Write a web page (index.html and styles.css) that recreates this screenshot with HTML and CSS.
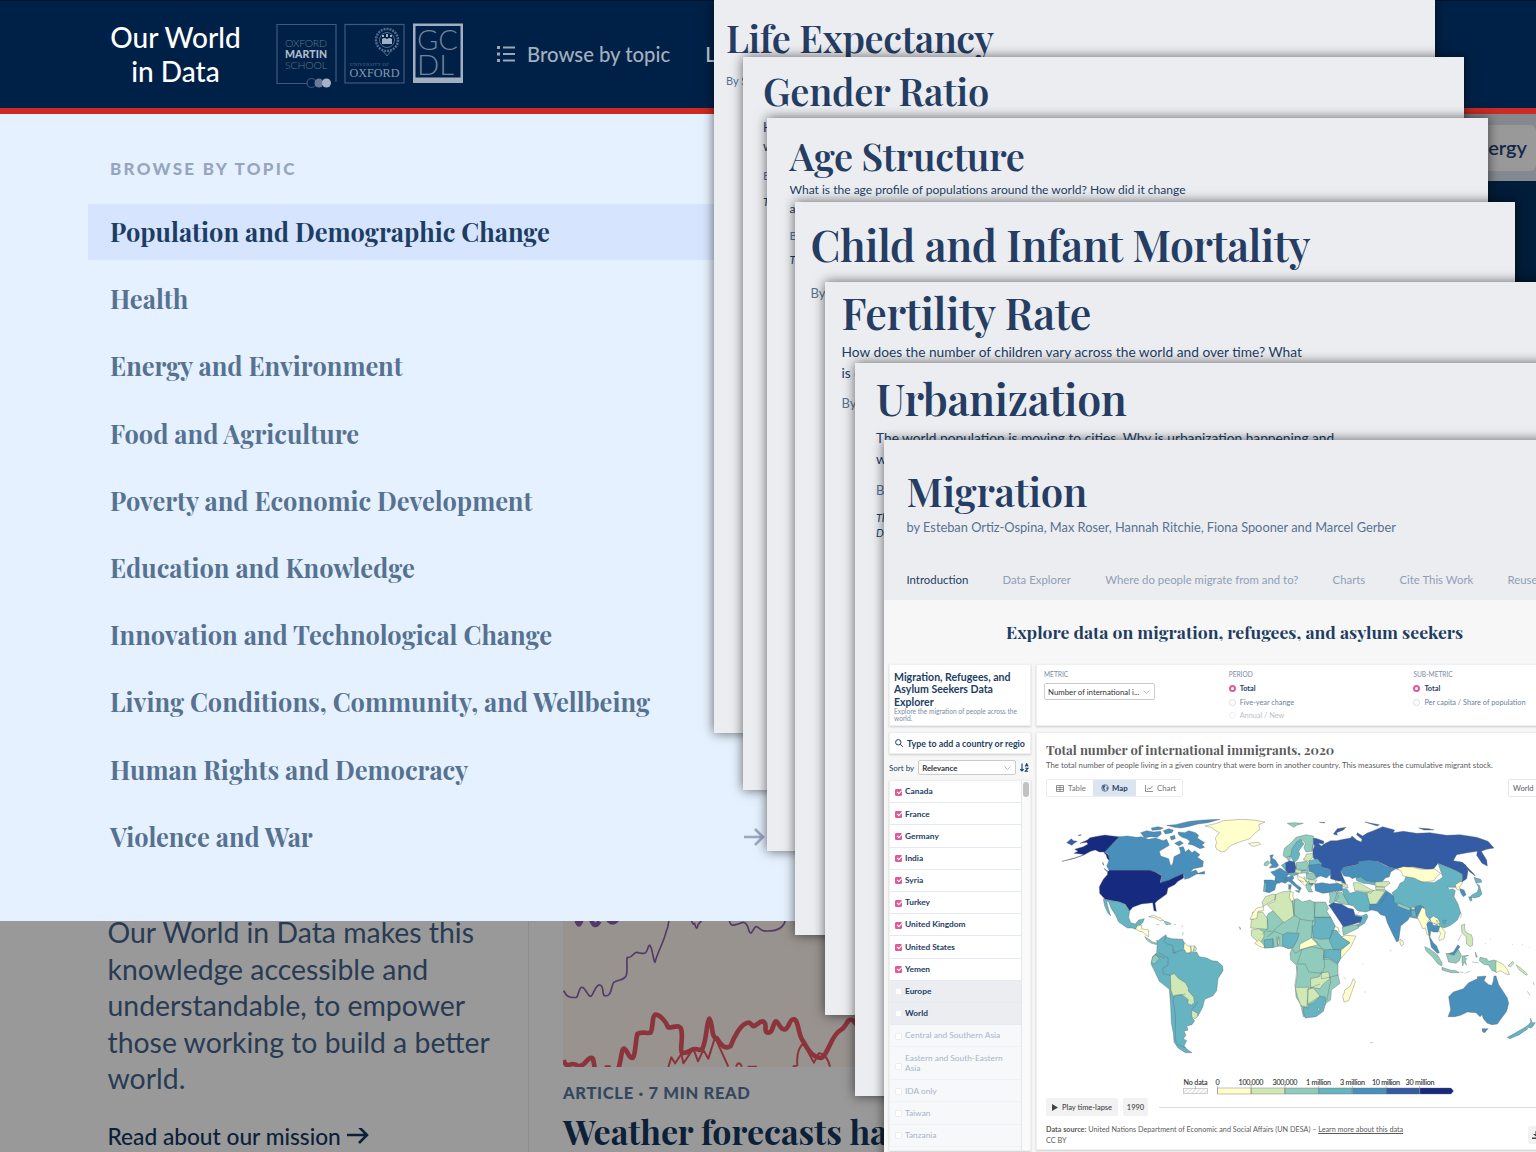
FILE: index.html
```html
<!DOCTYPE html>
<html lang="en">
<head>
<meta charset="utf-8">
<title>Our World in Data</title>
<link rel="stylesheet" href="styles.css">
</head>
<body>
<header class="site-header">
  <div class="brand">Our World<br>in Data</div>
  <svg class="logos" width="190" height="70" viewBox="0 0 190 70">
    <g fill="none" stroke="#40587a" stroke-width="1.2">
      <path d="M31 63.500H1V4.500H60V62"/>
      <rect x="69" y="4.500" width="59" height="58.500"/>
      <circle cx="35.500" cy="63" r="4.500"/>
    </g>
    <circle cx="43" cy="63" r="4.500" fill="#68799a"/>
    <circle cx="50.500" cy="63" r="4.500" fill="#a9b2c4"/>
    <g class="lato" font-size="10.500" fill="#61748f">
      <text x="9" y="26.500" textLength="42" font-weight="300">OXFORD</text>
      <text x="9" y="37.500" textLength="42" font-weight="900" fill="#b0bac9">MARTIN</text>
      <text x="9" y="49" textLength="42" font-weight="300">SCHOOL</text>
    </g>
    <g fill="none" stroke="#54698a">
      <circle cx="111" cy="20" r="11" stroke-width="2.500" stroke-dasharray="2 1"/>
      <circle cx="111" cy="20" r="7.500"/>
      <path d="M107 31l4 5 4-5"/>
    </g>
    <path d="M106 19q2-2 5 0q3-2 5 0v5h-10zM106 15h2v2h-2zM110 14h2v3h-2zM114 15h2v2h-2z" fill="#a3aec0"/>
    <g class="crest-text" fill="#8796ae">
      <text x="74" y="46" font-size="5" textLength="39" fill="#50658a">UNIVERSITY OF</text>
      <text x="73.500" y="57" font-size="12" textLength="50" lengthAdjust="spacingAndGlyphs">OXFORD</text>
    </g>
    <path d="M137 3.500h50v59.500h-50zM139.500 6v51.500h45V6z" fill="#a3aec0" fill-rule="evenodd"/>
    <g class="lato" font-size="28" font-weight="300" fill="#73849d">
      <text x="141" y="29.500" textLength="41" lengthAdjust="spacingAndGlyphs">GC</text>
      <text x="141" y="54.500" textLength="37" lengthAdjust="spacingAndGlyphs">DL</text>
    </g>
  </svg>
  <nav class="top-nav">
    <svg width="20" height="18" viewBox="0 0 20 18" fill="#9ba6b8"><path d="M1 1h3v3H1zM1 7.500h3v3H1zM1 14h3v3H1zM7 1.500h12v2H7zM7 8h12v2H7zM7 14.500h12v2H7z"/></svg>
    <span>Browse by topic</span>
    <span class="next">Latest</span>
  </nav>
</header>

<main class="home">
  <div class="topic-strip"><span class="chip">Energy</span></div>
  <div class="hero"></div>
  <section class="columns">
    <div class="mission">
      <p>Our World in Data makes this<br>knowledge accessible and<br>understandable, to empower<br>those working to build a better<br>world.</p>
      <a>Read about our mission
        <svg width="22" height="18" viewBox="0 0 22 18" fill="none" stroke="#0c2138" stroke-width="2.600"><path d="M0 7h20M12-1l8 8-8 8"/></svg></a>
    </div>
    <article class="story">
      <svg class="thumb" width="340" height="167" viewBox="129 0 1020 501">
        <rect x="129" width="1020" height="501" fill="#98938f"/>
        <g fill="none" stroke="#543a68" stroke-width="5" stroke-linejoin="round">
          <path d="M131 272C140 292 150 294 170 292C178 280 176 262 186 262S204 290 212 289S226 252 240 255S244 288 256 288C276 288 272 262 281 247C295 238 312 242 319 226C324 210 318 182 322 172C338 176 340 156 350 157S370 164 377 158S384 134 390 136C399 150 398 176 405 187C410 164 430 128 437 100Q444 84 447 60"/>
          <path d="M512 55Q520 80 524 70Q530 96 534 74L545 62M628 55C628 80 640 77 652 73S672 62 680 74S684 92 690 98S700 82 708 80S720 96 740 93Q790 94 796 60"/>
          <path d="M170 60q6 26 14 0M214 60q10 28 24 4M265 60q12 14 26 0" stroke-width="14"/>
        </g>
        <g fill="none" stroke="#8c343c" stroke-width="14" stroke-linejoin="round">
          <path d="M131 480Q136 500 150 494T176 500L192 492Q216 462 220 480L224 503M254 503H272M296 503C304 480 304 446 312 446S326 474 336 474S346 426 352 402C366 392 382 402 392 398C402 374 394 350 406 344C420 344 438 364 444 382C460 384 480 370 484 390C490 420 478 450 486 458C505 462 510 446 526 447S540 456 548 444C560 420 560 362 568 356C580 370 572 414 590 414C606 440 616 448 632 438C642 410 660 380 674 372S690 368 698 377S720 356 732 366S728 396 744 398S760 362 768 364S780 390 794 388S808 354 822 358S834 402 848 422S866 460 888 470S912 468 922 450S942 400 962 390S980 350 1000 362L1030 400"/>
          <path d="M445 501L454 472L465 490L484 462L490 490L520 446L534 484L550 450L565 476L585 412L625 500M648 500q8-20 18 0M683 500h28M818 500l14-4Q828 450 850 430L882 488L896 460Q920 460 930 500" stroke-width="6"/>
        </g>
      </svg>
      <div class="kicker">ARTICLE · 7 MIN READ</div>
      <h2>Weather forecasts have become</h2>
    </article>
  </section>
</main>

<aside class="topic-menu">
  <div class="menu-label">BROWSE BY TOPIC</div>
  <ul>
    <li class="active">Population and Demographic Change</li>
    <li>Health</li>
    <li>Energy and Environment</li>
    <li>Food and Agriculture</li>
    <li>Poverty and Economic Development</li>
    <li>Education and Knowledge</li>
    <li>Innovation and Technological Change</li>
    <li>Living Conditions, Community, and Wellbeing</li>
    <li>Human Rights and Democracy</li>
    <li>Violence and War
      <svg width="21" height="18" viewBox="0 0 21 18" fill="none" stroke="#98a9c2" stroke-width="2.600"><path d="M0 9h19M11 1l8 8-8 8"/></svg></li>
  </ul>
</aside>

<section class="sheet life"><h1>Life Expectancy</h1><p class="by">By Saloni Dattani</p></section>
<section class="sheet gender"><h1>Gender Ratio</h1><p class="lead">How does<br>what</p><p class="by">By Hannah</p><p class="note">This</p></section>
<section class="sheet age"><h1>Age Structure</h1><p class="lead">What is the age profile of populations around the world? How did it change<br>and</p><p class="by">By Hannah</p><p class="note">This</p></section>
<section class="sheet child"><h1>Child and Infant Mortality</h1><p class="by">By Max</p></section>
<section class="sheet fertility"><h1>Fertility Rate</h1><p class="lead">How does the number of children vary across the world and over time? What<br>is driving</p><p class="by">By Max</p></section>
<section class="sheet urban"><h1>Urbanization</h1><p class="lead">The world population is moving to cities. Why is urbanization happening and<br>what</p><p class="by">By Hannah</p><p class="note">This<br>Data</p></section>

<section class="sheet migration">
  <div class="m-head">
    <h1>Migration</h1>
    <p class="authors">by Esteban Ortiz-Ospina, Max Roser, Hannah Ritchie, Fiona Spooner and Marcel Gerber</p>
    <nav class="tabs"><span class="on">Introduction</span><span>Data Explorer</span><span>Where do people migrate from and to?</span><span>Charts</span><span>Cite This Work</span><span>Reuse</span></nav>
  </div>
  <h2>Explore data on migration, refugees, and asylum seekers</h2>
  <div class="explorer">
    <div class="side">
      <div class="card ex-title"><b>Migration, Refugees, and<br>Asylum Seekers Data<br>Explorer</b><small>Explore the migration of people across the<br>world.</small></div>
      <div class="card search"><svg width="8" height="8" viewBox="0 0 8 8" fill="none" stroke="#1d3d63"><circle cx="3.300" cy="3.300" r="2.700"/><path d="M5.300 5.300L7.800 7.800"/></svg><span>Type to add a country or regio</span></div>
      <div class="sort"><span>Sort by</span><div class="select">Relevance<svg width="7" height="4" viewBox="0 0 7 4" fill="none" stroke="#bbb"><path d="M.5.5l3 3 3-3"/></svg></div>
        <svg width="9" height="9" viewBox="0 0 9 9" fill="none" stroke="#1d3d63" stroke-width="1.100"><path d="M2 .5v7.500M.3 6.200L2 8l1.700-1.800M5.300 3.500L6.700.7l1.400 2.800M5.800 2.700h1.800M5.300 5.300h2.600L5.300 8.200h2.800"/></svg></div>
      <div class="card list">
        <ul>
          <li class="sel"><i></i>Canada</li><li class="sel"><i></i>France</li><li class="sel"><i></i>Germany</li><li class="sel"><i></i>India</li><li class="sel"><i></i>Syria</li><li class="sel"><i></i>Turkey</li><li class="sel"><i></i>United Kingdom</li><li class="sel"><i></i>United States</li><li class="sel"><i></i>Yemen</li>
          <li class="grp"><i></i>Europe</li><li class="grp"><i></i>World</li>
          <li class="off"><i></i>Central and Southern Asia</li><li class="off tall"><i></i><span>Eastern and South-Eastern<br>Asia</span></li><li class="off"><i></i>IDA only</li><li class="off"><i></i>Taiwan</li><li class="off"><i></i>Tanzania</li>
        </ul>
        <div class="scroll"><div class="thumb-bar"></div></div>
      </div>
    </div>
    <div class="content">
      <div class="card controls">
        <div class="ctl metric"><h3>METRIC</h3><div class="select">Number of international i...<svg width="7" height="4" viewBox="0 0 7 4" fill="none" stroke="#bbb"><path d="M.5.5l3 3 3-3"/></svg></div></div>
        <div class="ctl"><h3>PERIOD</h3><p class="pick"><i></i>Total</p><p><i></i>Five-year change</p><p class="dis"><i></i>Annual / New</p></div>
        <div class="ctl"><h3>SUB-METRIC</h3><p class="pick"><i></i>Total</p><p><i></i>Per capita / Share of population</p></div>
      </div>
      <div class="card chart">
        <h3>Total number of international immigrants, 2020</h3>
        <p class="sub">The total number of people living in a given country that were born in another country. This measures the cumulative migrant stock.</p>
        <div class="views">
          <div class="view-tabs">
            <span><svg width="8" height="7" viewBox="0 0 8 7" fill="none" stroke="#777" stroke-width=".8"><path d="M.5.5h7v6h-7zM.5 2.500h7M.5 4.500h7M4 .5v6"/></svg>Table</span>
            <span class="on"><svg width="8" height="8" viewBox="0 0 8 8"><circle cx="4" cy="4" r="3.300" fill="none" stroke="#44618a" stroke-width=".8"/><path d="M1 2l2-1 1.500.7-.5 1.500L3 4l1 1-.5 2L2 5zM5.500 3l1.700.5-.5 2-1 .5z" fill="#44618a"/></svg>Map</span>
            <span><svg width="8" height="7" viewBox="0 0 8 7" fill="none" stroke="#777" stroke-width=".8"><path d="M.5 0v6.500H8M2 5l1.500-2L5 4l2.500-3"/></svg>Chart</span>
          </div>
          <div class="region">World</div>
        </div>
        <svg class="map" width="490" height="270" viewBox="18 0 1470 810">
          <g stroke="#5c6468" stroke-width="1.100" stroke-linejoin="round">
            <g class="c5">
              <path d="M237 110L262 108 290 112 305 110 325 118 347 114 370 122 380 118 388 136 378 142 358 154 362 168 386 176 392 197 398 192 402 170 422 160 418 142 430 140 436 156 446 148 456 158 464 152 480 164 472 172 490 184 488 200 460 206 450 216 468 210 474 220 494 214 494 222 470 222 448 234 434 238 432 222 404 232 386 242 362 248 366 226 348 216 328 212H208L200 198 206 184 206 162 192 156z"/>
              <path d="M302 98l18-6 20 4 22-2 2 8-12 10-20-2-18 4zM334 84l20-4 16 4-10 5-24 2zM370 92l16-6 14 4-4 8-20 4zM380 76l26-2 24-6 20-4 40-4 50-2-36 10-30 4-30 8-22 4-20-2zM414 96l20 2 12-6 20 6 10 8-4 8 22 14-8 6 8 8-14 4-20-10-16-4 6-8-10-8-14-4-10-8zM404 130l16-8 10 8-14 8zM188 186l4 10-3-2zM192 205l14 10-8-2zM390 110l14-4 2 10-12 4z"/>
            </g>
            <path class="c7" d="M237 110L210 107 195 105 172 109 150 113 142 120 120 130 140 127 144 132 130 140 104 148 114 154 102 160 122 162 132 164 104 174 66 184 100 176 130 166 152 154 166 150 178 156 192 156 205 164 208 180 202 176 198 164 192 158z"/>
            <path class="c6" d="M80 128l14-12 6 6 12 2-10 6-6 6zM114 106l10-2-4 3z"/>
            <path class="c7" d="M208 211H328L346 216 365 227 360 248 386 241 404 232 430 221 431 234 414 244 404 254 384 264 380 282 352 302 345 310 349 334 342 332 338 308 304 312 278 322 269 333 256 313 238 306 195 298 179 280 178 260 190 238 202 224 203 215z"/>
            <path class="c4" d="M190 297L218 303 237 305 256 314 269 333 266 352 272 368 286 372 296 360 313 356 308 368 300 376 291 378 288 388 276 384 262 384 236 366 226 344 214 326 206 306 200 302 203 318 212 348 204 340 194 318z"/>
            <g class="c1">
              <path d="M495 78L530 70 550 62 604 58 640 60 675 66 656 74 660 88 644 100 630 116 592 128 570 138 556 154 546 156 530 148 526 138 530 128 526 114 538 98 524 90 514 82zM626 130l14-2 16-1 6 6-20 6-8-2zM326 350l14-4 20 8 12 8-12 0-14-8zM288 384l6-8h12l-2 10 10 2 12 2 0 20-10-6-8-8-10-2-10-6zM428 426l8 4 6 8 10 0 4 18-18 4-6-12zM452 438l12 0-4 18-8 0z"/>
            </g>
            <path class="c3" d="M314 410l10 6 14 10 14 4-2-10 6 6-4 8-18-4-14-10zM372 364l12 2 10 6-16 2zM348 373l10 0M402 373l6 1M426 376v6M430 396l-3 10M596 380l6 4-2 6"/>
            <path class="c4" d="M352 424L364 414 378 404 380 412 396 416 428 418 433 430 430 446 440 460 470 456 478 470 500 474 516 482 532 484 548 498 549 512 534 536 530 572 518 588 494 598 488 622 474 648 456 654 464 662 456 674 440 678 444 690 432 694 438 706 430 716 440 722 432 738 444 750 456 758 436 758 414 744 402 726 400 700 394 668 392 620 388 568 358 544 344 514 333 492 338 470 350 458z"/>
            <path class="c2" d="M391 525l12-4 12 14 22 14 8 16 0 8 16 18 2 16-8 8-12-4 2-12-18-14-10 0-18 4-6-18zM455 630l18 10 0 10-8 6-10-4zM464 438l6 8-4 8-6-2z"/>
            <path class="c3" d="M338 470l10-6 10 12-14 16-10-4z"/>
            <path fill="none" d="M378 408l-6 16 10 8 16 4 2 24 14-6 14-4M356 458l28 16 0 22-16 8 2 18 22 4M400 448l6 14M402 590q-6 10 0 30t4 70 14 46l18 8M402 586l36-4M455 630l20-26M344 462l30 12"/>
          </g>
          <g transform="translate(660 0)" stroke="#5c6468" stroke-width="1.100" stroke-linejoin="round">
            <path class="c6" d="M150 112L172 116 192 124 190 132 174 130 184 138 196 130 212 122 230 122 250 118 272 114 276 108 290 120 304 126 306 118 290 104 292 98 308 108 320 100 340 92 368 80 404 90 400 98 430 94 470 100 510 98 560 106 600 104 650 112 684 124 702 144 680 148 664 154 680 180 682 198 666 190 650 166 652 154 622 158 590 164 580 182 604 186 618 196 624 214 620 236 606 246 606 222 590 214 570 204 534 190 520 208 500 208 456 200 414 208 390 202 352 184 310 186 290 194 252 202 242 214 250 234 258 252 236 244 212 236 210 208 186 202 174 186 160 174 158 150 164 138z"/>
            <path class="c6" d="M220 102l12-16 26-4-8 8-20 8 2 8zM314 66l20 4 24 4-6 4zM476 84l30 2 16 4-30 0zM178 67l16 0 0 2zM606 186l10 10 26 26 4 6-16-12-22-22z"/>
            <path class="c3" d="M82 70l20-2 28 2-20 6-8 6zM70 160l4-16 18-14 16-18 30-8 22 4 0 28-4 18-18 2-6-12 4-14-8-10-12 6-14 22-8 22-14 4-10-6z"/>
            <path class="c4" d="M92 168l4-22 14-20 12-8 10 14-8 10-8 12 4 8-6 16-12 10z"/>
            <path class="c5" d="M30 166l10-2-4 10 10 6 10 16-6 6-22 2 8-10-6-6 2-10z"/>
            <path class="c3" d="M14 188l10-6 4 8-8 8-8-2zM80 172l8-4 4 8-6 8z"/>
            <path class="c5" d="M32 216l12-4 16-8 16 10 10 6-6 12 6 10-10 8-12-4-6 4-14-4 2-16z"/>
            <path class="c5" d="M12 240l24 0 20 6-8 8-4 16-16 8-10-2z"/>
            <path class="c4" d="M13 248l7 0-2 28-8-2z"/>
            <path class="c5" d="M78 232l20-4 4 6-6 6 14 14 14 10-4 8-12-10-16-14-12-8-8 0zM106 272l12 0 0 6zM86 254l8 0-2 14-6 0z"/>
            <path class="c6" d="M76 188l14-6 14 4 4 18-4 14-20 2-8-10z"/>
            <path class="c4" d="M64 196l12-8 2 14-4 6zM84 222l34-6-4 8-20 4zM146 182l26-6 14 16-8 8-30-2zM122 240l8 0"/>
            <path class="c3" d="M108 188l32-4 6 8-2 16-16 4-20-6zM122 212l20-2 4 8-24 2zM138 220l28-2 6 16-16 6-16-4zM138 246l22-4-4 10-4 12 6 12-12 0-8-14z"/>
            <path class="c2" d="M140 162l18-2 0 12-12 12-16-4zM106 208l20 4-4 8-16-2zM146 238l24 2-6 12-16-2zM164 218l8 8-4 6z"/>
            <path class="c1" d="M112 226l20 10 10 12-6 10-10-10-12-10zM132 230l8 8-2 8zM226 242l20 2-2 10-16-6z"/>
            <path class="c5" d="M146 196l34-4 10 12 22 4 0 14-12 12-18-6-12 4-8-14-16-4zM164 252l22-4 22 4 24-2 16 6-2 16-24 2-18 4-16 2-22-8zM146 252l14-2-2 6z"/>
            <path class="c5" d="M242 212l12-10 40-8 2-10 34-4 26 6 22 12 30 8-16 10-4 14-12 4-12 14-34-2-22 0-20-14-12 4-6-6-18-2z"/>
            <path class="c4" d="M288 234l14-4 16 12 24 4 4 10-16-4-20-2-20-8z"/>
            <path class="c2" d="M280 248l16 0 22 12 22 12-8 8-18-6-30-2zM322 276l16-4 20-4 20 2-14 22-18 22-24 0-4-16zM346 246l40-2 4 6-14 10-28 0zM346 260l28 2-2 12-24-4zM246 252l16 2 2 10-16-4z"/>
            <path class="c1" d="M410 206l20-6 26 2 28 6 24 0 14-2 20 14-12 10-8 12-26 4-30-4-24-10-14-6-4-12z"/>
            <path class="c4" d="M534 190l20 8 36 14 18 12 0 16-8 12-12 10-26 0 8 8 6-4 10 6-4 18 12 22 8 26-10 22-20 16-20 8-16-6-20-12-14-12-12 4-28-4-28-6-22-14-14-26 6-16-8-14 16-12 8-16 12-6 6-14 24 4 24 12 36 2 20-12 6-6z"/>
            <path class="c1" d="M586 254l16-10 6 4-10 14 4 10-12-4z"/>
            <path class="c5" d="M600 266l12 4 6 14-8 6-8-12z"/>
            <path class="c4" d="M642 232l20 6 4 8-18 4zM650 252l8 4 8 26-8 8-14 4-8-2-6 2 4-8 18-10 4-14zM626 290l8 2 2 10-6 0z"/>
            <path class="c4" d="M246 266l14 0 10 14 20-6 30 4 6 22 8 30-16 6-26-4-12-14-14-4-14-24z"/>
            <path class="c5" d="M330 312l20 0 14-20 14-20 10 6 14 10 0 18 8 6 20 10 22 2 6 20-8 4-6 12-22 18-6 44-6 4-14-28-14-30-6-20-14-4-10-10-24-6zM466 320l14-4 12 6-14 16-4 14-8-12z"/>
            <path class="c3" d="M412 308l20 8 20 8-4 8-36-14zM208 278l20-4 8 14-8 14-10 10-10-4 2-14zM232 274l14 4 14 24 6 12-20-2-22-10 4-14z"/>
            <path class="c4" d="M452 332l14 0 4 20-14-2zM290 344l12-12M286 344l18 4 16-6 4 8-10 20-24 14-24 8 0-4 34-18z"/>
            <path class="c6" d="M206 316l14-8 24 4 20 12 16 4 6 20 20 4-4 14-32 10-20 6-4-8-20-30-12-18z"/>
            <path class="c3" d="M246 382l26-6 20-2 4 10-46 22z"/>
            <path class="c1" d="M472 352l14-30 10 6 2 18 10 12-6 10 6 32-6 6-6-22-8 2-6-14zM420 418l8 4 4 10-8 6-4-10zM510 356l10-8 14 8 6 12-8 6-18-8zM530 360l12 20 14 16-4 20-14 6-2-6 6-16-10-18zM454 322l10 0 0 6-10-2z"/>
            <path class="c5" d="M500 372l8-8 8 4 4 8 20 2-6 18-14 0-8-4-2 20 10 16 10 10 8 20-6 2-18-18-6-30zM562 462l18-6 14-22 6 6-8 12-10 14z"/>
            <path class="c3" d="M494 440l14 6 24 18 14 24 0 10-12-6-16-20-20-20zM546 502l24 8 18 2 10 6-24 0-28-8zM558 460l26 6 12-16 8 16-6 16-10 8-22-4zM606 468l20-2-14 6 8 4-4 8 4 12-8-10-4 12-2-14zM646 456l6 14-4 2zM660 472l20 4 6 8 16-4 8 4 0 32-14-4-10-16-16-4-12-10zM600 516l10 2M616 520l14-6M636 486l20 2"/>
            <path class="c2" d="M604 376l10-4 0 18 8 10 12 4 4 12 0 20-8 4-10-8-2-22-12-12zM604 404l-10 18"/>
            <path class="c1" d="M708 482l20 10 14 16 6 16-10-2-16-10-14 6z"/>
            <path class="c2" d="M744 498l14-14 4 6-10 10zM768 494l14 10 20 18-2 4-22-16zM802 574l8 12M820 546l3 10"/>
            <path class="c5" d="M564 650l8-20-6-40 14-14 30-10 16-18 26-12 0-6 26-2-6 14 14 12 10 2 4-14 2-14 6 0 8 26 12 18 14 22 4 16-6 24-18 24-10 14-16 2-14-4-12-14-4-12-6 6-12-12-26-2-20 10-18 4zM666 686l18 0-10 12-6-2z"/>
            <path class="c4" d="M812 654l4 14 10 0-8 12-6 4-14-4 10-8 4-6zM798 680l6 6-26 18-28 12-8-4 22-12zM548 362l10-2-4 12-4-2z"/>
            <!-- Africa -->
            <path class="c3" d="M0 386L26 340 96 300 112 296 128 306 150 300 160 306 196 306 206 326 200 334 212 352 222 380 218 392 232 404 244 410 270 414 262 440 244 466 234 490 234 526 240 550 214 570 212 600 196 610 180 640 130 650 122 614 108 590 106 560 112 520 108 494 92 480 90 460 96 446 60 438 40 442 14 444 0 430z"/>
            <path class="c2" d="M6 308l10-18 24-8 8 2-2 14-20 10-16 12zM46 284l20-8 26-4 0 20 6 14 4 42-30 20-50-54 22-10zM-22 336l30 0 14 20 2 32-52-4 2-26 4 0z"/>
            <path class="c1" d="M90 274l10 4-2 10 4 10-8 8-6-14zM-10 324l20-4 0 12-16 2-4 22-20 2 8-18z"/>
            <path class="c2" d="M-26 390l22-4 16 10 0 14-8 14 4 14-14-12-20-18zM106 562l40 0-6 60-18-6-10-26zM152 536l26-6 6-12 22-2 4 20-20 16-10 14-28-4zM142 568l18-4 20 24-20 14-16 10z"/>
            <path class="c1" d="M-16 430l12-10 12 10 8 14-16-4zM120 432l34-18 20 20-22 6-34 10zM244 412l12-6 32 2-16 34-30 34 0-24 28-24zM254 570l16-10 10-24 6 8-4 14-16 44-14 4-4-18 6-12zM220 378l14 4 4 14-18-4zM56 410l2 22-5 0z"/>
            <path class="c4" d="M12 420l26-4 2 26-26 2zM68 404l14-6 36 2-6 20-12 22-16 4-16-8zM166 352l46 0 14 26-10 24-6 14-30 2-20-6-4-32 8-4zM216 392l12-2 20 24 22 14-28 20-22 0-12-26zM194 450l16-2 32 2 0 26-8 14-30-18-14 2zM130 622l16 2 0-10 14-4 22-22 14 4 2 16-8 26-22 16-32 4-6-16z"/>
            <path fill="none" d="M96 302l6 42 20 14 40 6 4-58M104 300l-2 50M162 306l2 46h48M22 356v30L6 404M72 364l-34 30-16 0M120 356l-10 42M158 360l-4 54M68 404l-24-10-22 16M38 414l4 28M50 410l4 30M96 446l10 14 20-12 28-8 26 6 16 2M126 448l-14 44 24 0 10 24 40 4 8-20-4-50M112 500l-8 60M188 478l20 0 26 16M184 516v20l24-4 30-8M180 552l-30 12M210 552l-10 50M210 530l2 22M158 412l30 36"/>
            <path class="c1" d="M172 624l8 2-4 6zM192 604l4 4-3 4z"/>
            <path fill="none" d="M308 493h2M313 576h3M330 728h8M390 450l4 3M676 430h2M756 433h2M786 434h2M808 442h2M250 532l6 4M600 336l4 6-2 12M690 418h2M382 276l-6 16-16 20M108 208v-10M116 240l16 6M156 150l4-20"/>
          </g>
        </svg>
        <svg class="legend" width="490" height="22" viewBox="0 0 490 22">
          <defs><pattern id="hatch" width="3" height="3" patternUnits="userSpaceOnUse" patternTransform="rotate(45)"><path d="M0 0v3" stroke="#bbb"/></pattern></defs>
          <g class="lato" font-size="7.200" fill="#333" stroke="#333" stroke-width=".1" text-anchor="middle"><text x="149.500" y="8" textLength="24">No data</text><text x="171.500" y="8">0</text><text x="205" y="8" textLength="25">100,000</text><text x="239" y="8" textLength="25">300,000</text><text x="272.500" y="8" textLength="25">1 million</text><text x="306.500" y="8" textLength="25">3 million</text><text x="340" y="8" textLength="28">10 million</text><text x="374" y="8" textLength="29">30 million</text></g>
          <rect x="137.500" y="11.500" width="24" height="5" fill="url(#hatch)" stroke="#bbb" stroke-width=".7"/>
          <g stroke="#666" stroke-width=".4"><path class="c1" d="M171.500 11h33.700v6h-33.700z"/><path class="c2" d="M205.200 11h33.700v6h-33.700z"/><path class="c3" d="M238.900 11h33.700v6h-33.700z"/><path class="c4" d="M272.600 11h33.700v6h-33.700z"/><path class="c5" d="M306.300 11H340v6h-33.700z"/><path class="c6" d="M340 11h33.700v6H340z"/><path class="c7" d="M373.700 11H405l2.500 3-2.500 3h-31.300z"/></g>
          <path d="M171.500 9v8M205.200 9v8M238.900 9v8M272.600 9v8M306.300 9v8M340 9v8M373.700 9v8M149.500 9v3" stroke="#999" stroke-width=".6"/>
        </svg>
        <div class="timeline"><span class="btn"><svg width="6" height="7" viewBox="0 0 6 7"><path d="M0 0l6 3.500L0 7z" fill="#444"/></svg>Play time-lapse</span><span class="btn year">1990</span><i></i></div>
        <div class="source"><div><b>Data source:</b> United Nations Department of Economic and Social Affairs (UN DESA) – <u>Learn more about this data</u><br>CC BY</div>
          <span class="dl"><svg width="9" height="8" viewBox="0 0 9 8"><path d="M3.500 0h2v3H8L4.500 6 1 3h2.500zM0 6.500h9V8H0z" fill="#444"/></svg></span></div>
      </div>
    </div>
  </div>
</section>
</body>
</html>
```
FILE: styles.css
```css
* { box-sizing: border-box; margin: 0; padding: 0; }
body { position: relative; width: 1536px; height: 1152px; overflow: hidden; background: #999; font-family: Lato, "Liberation Sans", sans-serif; color: #1d3d63; }
h1, .topic-menu li, .story h2, .migration h2, .chart h3 { font-family: "Playfair Display", "Liberation Serif", serif; font-weight: 700; }
ul { list-style: none; }
svg { display: block; flex: none; }
.lato { font-family: Lato, sans-serif; }
.crest-text { font-family: "Liberation Serif", serif; }
.c1 { fill: #ffffcc; } .c2 { fill: #d0e8b6; } .c3 { fill: #90cbbb; } .c4 { fill: #66b3c2; }
.c5 { fill: #488fbc; } .c6 { fill: #335ca4; } .c7 { fill: #162a80; }

.site-header { display: flex; height: 114px; padding: 0 0 0 110px; background: #002147; border-top: 1px solid #00122f; border-bottom: 6px solid #cc2a22; }
.brand { width: 131px; padding-top: 20px; font-size: 28px; line-height: 33.500px; text-align: center; color: #fff; font-weight: 500; white-space: nowrap; }
.logos { margin: 19px 0 0 35px; }
.top-nav { display: flex; align-items: center; height: 105px; margin-left: 30px; font-size: 20.300px; font-weight: 500; color: #a4afbf; white-space: nowrap; }
.top-nav span { margin-left: 11px; }
.top-nav .next { margin-left: 35px; color: #c5ccd6; }

.topic-strip { display: flex; justify-content: flex-end; align-items: center; height: 67px; background: #84888f; }
.chip { width: 90px; height: 46px; padding-right: 9px; line-height: 45px; text-align: right; background: #999; border-radius: 6px; font-size: 20px; font-weight: 600; color: #14294a; }
.hero { height: 719px; background: #001d39; }
.columns { display: flex; height: 252px; }
.mission { width: 529px; padding: 14px 0 0 107.500px; border-right: 1px solid #8d8d8d; font-size: 28.400px; line-height: 36.600px; color: #293b53; white-space: nowrap; }
.mission a { display: flex; gap: 6px; align-items: center; margin-top: 22px; font-size: 22.700px; font-weight: 500; line-height: 36px; color: #0c2138; }
.story { width: 500px; padding-left: 34px; white-space: nowrap; }
.kicker { margin-top: 15px; font-size: 16.500px; font-weight: 900; letter-spacing: .700px; line-height: 22px; color: #33475f; }
.story h2 { margin-top: 5px; font-size: 34px; line-height: 44px; color: #0c2138; }

.topic-menu { position: absolute; left: 0; top: 114px; width: 830px; height: 807px; padding: 44px 0 0 88px; background: #e5f1fe; }
.menu-label { padding-left: 22px; font-size: 17px; line-height: 22px; font-weight: 900; letter-spacing: 2.300px; color: #97a6be; }
.topic-menu ul { margin-top: 24px; }
.topic-menu li { display: flex; align-items: center; justify-content: space-between; height: 56px; margin-bottom: 11.200px; padding: 0 65px 2px 22px; font-size: 25.460px; color: #577291; }
.topic-menu li svg { position: relative; top: 1px; }
.topic-menu .active { background: #d6e4fe; color: #1d3d63; }

.sheet { position: absolute; width: 720.500px; height: 733px; overflow: hidden; background: #ebedf1; box-shadow: 0 0 11px rgba(0,0,0,.6); white-space: nowrap; }
.sheet h1 { font-size: 38px; font-weight: 600; line-height: 46px; color: #263d63; letter-spacing: -.4px; }
.sheet .by { color: #577291; }
.sheet .note { font-style: italic; font-size: 11px; }
.life { left: 714px; top: 0; padding: 15px 12px; } .life .by { margin-top: 13px; font-size: 11px; }
.gender { left: 743px; top: 57px; padding: 11px 20px; } .gender h1 { letter-spacing: -.2px; } .gender .lead { margin-top: 4px; font-size: 13px; line-height: 19px; } .gender .by { margin-top: 12px; font-size: 12px; } .gender .note { margin-top: 12px; }
.age { left: 767px; top: 118px; padding: 15px 22.500px; } .age h1 { letter-spacing: -.33px; } .age .lead { margin-top: 1px; font-size: 12.060px; line-height: 19px; } .age .by { margin-top: 10px; font-size: 12px; } .age .note { margin-top: 10px; }
.child { left: 794.500px; top: 202px; padding: 20px 16px; } .child h1 { font-size: 42.800px; letter-spacing: -.46px; } .child .by { margin-top: 17px; font-size: 13px; }
.fertility { left: 825px; top: 282px; padding: 8px 16.500px; } .fertility h1 { font-size: 42.800px; letter-spacing: -.25px; } .fertility .lead { margin-top: 6px; font-size: 13.720px; line-height: 20.500px; } .fertility .by { margin-top: 12px; font-size: 13px; }
.urban { left: 855px; top: 363px; padding: 13px 21px; } .urban h1 { font-size: 42.800px; letter-spacing: -.25px; } .urban .lead { margin-top: 5px; font-size: 13.720px; line-height: 21px; } .urban .by { margin-top: 13px; font-size: 13px; } .urban .note { margin-top: 12px; line-height: 15px; }

.migration { left: 884px; top: 440px; background: #f7f7f7; }
.m-head { height: 160px; padding: 28px 0 0 22.500px; background: #ebedf1; }
.migration h1 { font-size: 40px; line-height: 46px; letter-spacing: -.2px; }
.authors { margin-top: 4px; font-size: 12.800px; line-height: 18px; color: #577291; }
.tabs { display: flex; gap: 34.200px; margin-top: 35px; font-size: 11.380px; line-height: 18px; color: #8f9fb8; }
.tabs .on { color: #1d3d63; }
.migration h2 { padding: 20px 0 0 122px; font-size: 17.640px; line-height: 24px; color: #1d3d63; }
.explorer { display: flex; gap: 5px; padding: 20px 0 0 5px; }
.card { background: #fff; border: 1px solid #eeeff1; box-shadow: 0 1px 2px rgba(0,0,0,.18); }
.side { display: flex; flex-direction: column; gap: 6px; width: 142px; }
.ex-title { height: 62px; padding: 6px 4px; }
.ex-title b { display: block; font-size: 10.550px; line-height: 12.300px; }
.ex-title small { display: block; font-size: 6.650px; line-height: 7px; color: #7c8ba5; }
.search { display: flex; gap: 4px; align-items: center; height: 22px; padding-left: 5px; font-size: 8.900px; font-weight: 700; overflow: hidden; }
.sort { display: flex; align-items: center; gap: 4px; height: 15px; font-size: 8px; }
.select { display: flex; align-items: center; justify-content: space-between; width: 98px; height: 15px; padding: 0 4px 0 3px; background: #fff; border: 1px solid #ccc; border-radius: 2px; font-size: 7.800px; font-weight: 700; color: #333; }
.list { display: flex; height: 371px; margin-top: -1px; background: #f6f8fa; }
.list ul { width: 132px; border-right: 1px solid #e3e7ee; }
.list li { display: flex; align-items: center; gap: 3px; height: 22.200px; padding-left: 5px; border-bottom: 1px solid #e5eaf2; font-size: 8.350px; font-weight: 700; line-height: 10.500px; }
.list i { width: 7px; height: 7px; margin-top: 1px; background: #fff; border: 1px solid #ededed; border-radius: 1px; }
.list .sel { background: #fff; }
.list .sel i { position: relative; background: #de5b98; border-color: #de5b98; }
.sel i::after { content: ""; position: absolute; left: 1px; top: 0; width: 4px; height: 2px; border: solid #fff; border-width: 0 0 1px 1px; transform: rotate(-45deg); }
.grp { background: #ebedf1; }
.list .off { color: #a9b5c6; font-weight: 400; border-bottom-color: #eff2f6; }
.list .tall { height: 33px; }
.list .tall i { margin-top: 6px; }
.scroll { flex: 1; padding: 1px 1px; background: #fafafa; }
.thumb-bar { width: 6px; height: 15px; border-radius: 3px; background: #c1c1c1; }
.content { display: flex; flex-direction: column; gap: 6px; width: 600px; }
.controls { display: flex; height: 62px; padding: 5px 0 0 7px; }
.ctl { width: 184.700px; }
.ctl h3 { font-size: 6.600px; line-height: 8px; font-weight: 400; color: #7c8ba5; }
.ctl .select { width: 111px; height: 17px; margin-top: 5px; font-weight: 400; }
.ctl h3 + p { margin-top: 4px; }
.ctl p { display: flex; align-items: center; gap: 4px; height: 13.500px; font-size: 7.300px; color: #6c80a0; }
.ctl i { width: 7px; height: 7px; border: 1px solid #ddd; border-radius: 50%; }
.ctl .pick { color: #1d3d63; font-weight: 700; } .ctl .pick i { border: 2.300px solid #de5b98; }
.ctl .dis { color: #b9bfc9; } .ctl .dis i { border-color: #eee; }
.chart { height: 418px; padding: 8px 0 0 9px; color: #5b5b5b; }
.chart h3 { font-size: 13px; line-height: 17px; }
.sub { margin-top: 1px; font-size: 7.790px; line-height: 12px; }
.views { display: flex; justify-content: space-between; width: 495px; height: 18px; margin-top: 8px; }
.view-tabs { display: flex; border: 1px solid #eee; border-radius: 2px; font-size: 7.800px; color: #777; }
.view-tabs span { display: flex; gap: 4px; align-items: center; width: 46px; padding-left: 9px; }
.view-tabs .on { width: 43px; gap: 3px; padding-left: 8px; background: #dbe5f0; color: #1d3d63; font-weight: 700; }
.region { width: 33px; padding-left: 4px; line-height: 16px; border: 1px solid #e7e7e7; border-radius: 2px; font-size: 7.600px; }
.map { margin-top: 3px; }
.legend { margin-top: 7px; }
.timeline { display: flex; gap: 5px; align-items: center; margin-top: -1px; }
.btn { display: flex; align-items: center; justify-content: center; gap: 4px; width: 72px; height: 18px; border-radius: 2px; background: #f2f2f2; font-size: 7.500px; font-weight: 500; color: #444; }
.year { width: 25px; }
.timeline i { flex: 1; height: 1px; margin-left: 6px; background: #ddd; }
.source { display: flex; justify-content: space-between; width: 495px; margin-top: 8px; font-size: 7.240px; line-height: 10.500px; }
.source div { padding-top: 1px; }
.dl { display: flex; align-items: center; width: 13px; height: 18px; margin-top: 2px; padding-left: 4px; overflow: hidden; background: #f2f2f2; border-radius: 2px; }
```
